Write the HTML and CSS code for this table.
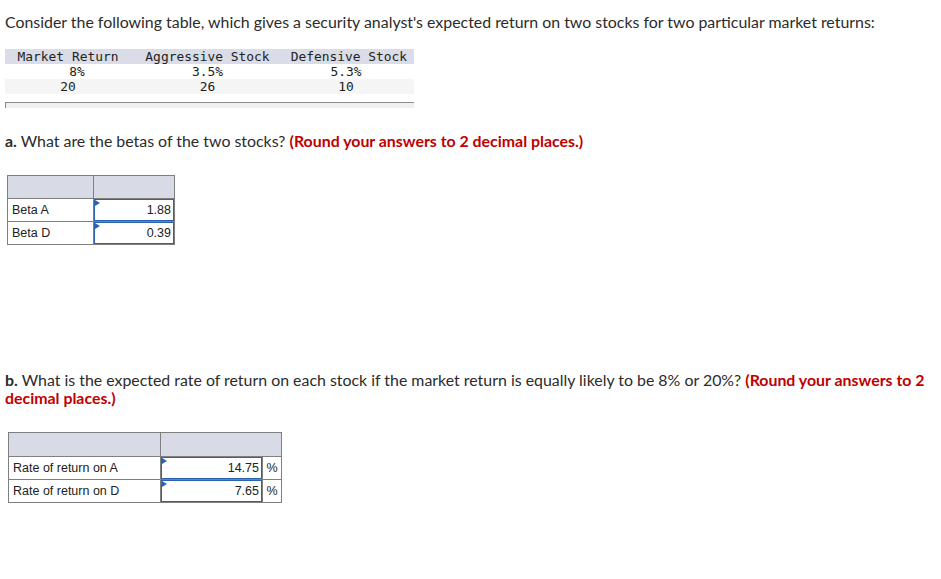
FILE: index.html
```
<!DOCTYPE html>
<html>
<head>
<meta charset="utf-8">
<link rel="stylesheet" href="styles.css">
</head>
<body>
<p class="intro">Consider the following table, which gives a security analyst's expected return on two stocks for two particular market returns:</p>
<div class="data">
  <table class="mono">
    <tr class="head"><td class="c1">Market Return</td><td class="c2">Aggressive Stock</td><td class="c3">Defensive Stock</td></tr>
    <tr><td class="c1 shift">8%</td><td class="c2">3.5%</td><td class="c3 back">5.3%</td></tr>
    <tr class="alt"><td class="c1">20</td><td class="c2">26</td><td class="c3 back">10</td></tr>
  </table>
  <div class="foot"></div>
</div>

<p class="q qa"><b>a.</b> What are the betas of the two stocks? <strong class="red">(Round your answers to 2 decimal places.)</strong></p>

<table class="ans ans-a">
  <tr class="hdr"><td class="lbl"></td><td class="val"></td></tr>
  <tr><td class="lbl">Beta A</td><td class="val"><div class="inp">1.88</div></td></tr>
  <tr><td class="lbl">Beta D</td><td class="val"><div class="inp">0.39</div></td></tr>
</table>

<p class="q qb"><b>b.</b> What is the expected rate of return on each stock if the market return is equally likely to be 8% or 20%? <strong class="red">(Round your answers to 2 decimal places.)</strong></p>

<table class="ans ans-b">
  <tr class="hdr"><td class="lbl"></td><td class="val" colspan="2"></td></tr>
  <tr><td class="lbl">Rate of return on A</td><td class="val"><div class="inp">14.75</div></td><td class="pct">%</td></tr>
  <tr><td class="lbl">Rate of return on D</td><td class="val"><div class="inp">7.65</div></td><td class="pct">%</td></tr>
</table>
</body>
</html>
```
FILE: styles.css
```
html, body {
  margin: 0;
  padding: 0;
  background: #fff;
}
body {
  font-family: Lato, "Open Sans", sans-serif;
  font-size: 15.9px;
  color: #2b2b2b;
}
.intro {
  margin: 0;
  padding: 13px 0 0 5px;
  line-height: 18px;
}
.data {
  margin: 18px 0 0 5px;
  width: 409px;
}
.mono {
  border-collapse: collapse;
  width: 409px;
  font-family: "DejaVu Sans Mono", monospace;
  font-size: 12.9px;
  color: #222;
}
.mono td {
  padding: 0;
  height: 15px;
  line-height: 15px;
  text-align: center;
  white-space: pre;
}
.mono .c1 { width: 117px; }
.mono .c2 { width: 163px; }
.mono .c3 { width: 129px; }
.mono .back { padding-right: 6px; }
.mono .head { background: #dadde7; }
.mono .alt { background: #f5f5f5; }
.mono .shift { padding-left: 18px; }
.foot {
  margin-top: 8px;
  height: 5px;
  border-top: 1px solid #8c8c8c;
  border-left: 1px solid #8c8c8c;
  background: #eef0f4;
}
.q {
  margin: 0 5px;
  line-height: 18px;
}
.q b { font-weight: 700; }
.red {
  color: #c00000;
  font-weight: 700;
}
.qa { margin-top: 24px; }
.ans {
  border-collapse: collapse;
  font-family: "Liberation Sans", Arial, sans-serif;
  font-size: 12.5px;
  color: #222;
}
.ans td {
  border: 1px solid #7f7f7f;
  padding: 0;
  height: 22px;
}
.ans .hdr td {
  background: #d8dbe5;
  height: 22px;
}
.ans .lbl {
  padding-left: 4px;
}
.ans .val {
  position: relative;
}
.inp {
  position: relative;
  margin: 0;
  height: 20px;
  line-height: 20px;
  border: 1px solid #2c63b0;
  text-align: right;
  padding-right: 2px;
}
.inp::before {
  content: "";
  position: absolute;
  left: 0;
  top: 0;
  border-top: 3px solid transparent;
  border-bottom: 3px solid transparent;
  border-left: 5px solid #2c63b0;
}
.ans-a { margin: 25px 0 0 7px; }
.ans-a .lbl { width: 81px; }
.ans-a .val { width: 80px; }
.qb { margin-top: 126px; }
.ans-b { margin: 25px 0 0 8px; }
.ans-b .lbl { width: 147px; }
.ans-b .val { width: 101px; }
.ans-b .hdr td { height: 23px; }
.ans-b .pct { width: 18px; text-align: center; padding: 0; }
```
